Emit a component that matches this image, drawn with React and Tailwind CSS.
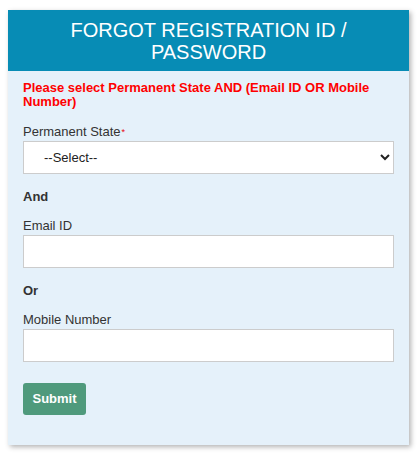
import { useState } from "react";

function Field({ label, required, children }) {
  return (
    <div className="flex flex-col">
      <label className="text-[13px] leading-[15px] text-[#333] mb-[2px]">
        {label}
        {required && (
          <sup className="text-red-600 text-[9px] ml-[1px] relative -top-[1px]">
            *
          </sup>
        )}
      </label>
      {children}
    </div>
  );
}

export default function App() {
  const [state, setState] = useState("");
  const [email, setEmail] = useState("");
  const [mobile, setMobile] = useState("");

  return (
    <div className="w-[419px] h-[456px] bg-white pt-[10px] pl-[8px] font-['Liberation_Sans',Arial,sans-serif]">
      <div className="w-[401px] h-[435px] bg-[#e5f1fa] shadow-[2px_2px_5px_rgba(0,0,0,0.3)] flex flex-col">
        <div className="bg-[#078cb5] text-white text-center text-[20px] leading-[22px] px-3 pt-[9px] pb-[8px] h-[61px]">
          FORGOT REGISTRATION ID / PASSWORD
        </div>
        <div className="flex flex-col px-[15px] pt-[10px]">
          <p className="text-[#ff0000] font-bold text-[13px] leading-[13.5px]">
            Please select Permanent State AND (Email ID OR Mobile Number)
          </p>
          <div className="mt-[16px]">
            <Field label="Permanent State" required>
              <select
                value={state}
                onChange={(e) => setState(e.target.value)}
                className="h-[33px] w-full bg-white border border-[#ccc] pl-[16px] pr-2 text-[13px] text-[#222] outline-none"
              >
                <option value="">--Select--</option>
              </select>
            </Field>
          </div>
          <div className="mt-[15px] text-[13px] leading-[15px] font-bold text-[#333]">
            And
          </div>
          <div className="mt-[14px]">
            <Field label="Email ID">
              <input
                type="text"
                value={email}
                onChange={(e) => setEmail(e.target.value)}
                className="h-[33px] w-full bg-white border border-[#ccc] px-2 text-[13px] outline-none"
              />
            </Field>
          </div>
          <div className="mt-[15px] text-[13px] leading-[15px] font-bold text-[#333]">
            Or
          </div>
          <div className="mt-[14px]">
            <Field label="Mobile Number">
              <input
                type="text"
                value={mobile}
                onChange={(e) => setMobile(e.target.value)}
                className="h-[33px] w-full bg-white border border-[#ccc] px-2 text-[13px] outline-none"
              />
            </Field>
          </div>
          <div className="mt-[21px]">
            <button className="h-[32px] w-[63px] rounded-[3px] bg-[#4f9a7c] text-white font-bold text-[13px]">
              Submit
            </button>
          </div>
        </div>
      </div>
    </div>
  );
}
